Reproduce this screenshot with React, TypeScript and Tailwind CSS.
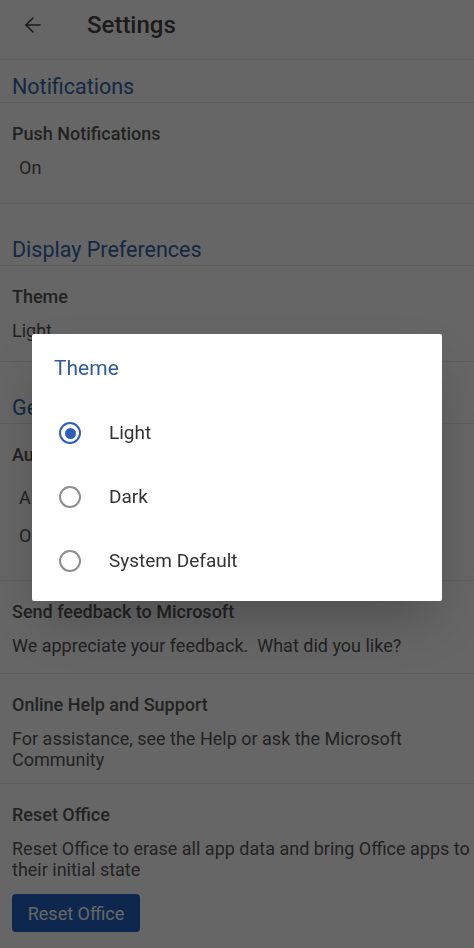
import { ArrowLeft } from "lucide-react";

const themes = ["Light", "Dark", "System Default"];

function SectionHeader({ title, top }: { title: string; top: string }) {
  return (
    <div className={`border-b border-[#ececec] px-3 pb-[2px] ${top}`}>
      <h2 className="text-[21.5px] leading-[26px] text-[#3565a8]">{title}</h2>
    </div>
  );
}

function Radio({ checked }: { checked: boolean }) {
  if (checked) {
    return (
      <span className="flex h-[22px] w-[22px] items-center justify-center rounded-full border-2 border-[#2f5fb3]">
        <span className="h-[11px] w-[11px] rounded-full bg-[#2f5fb3]" />
      </span>
    );
  }
  return <span className="h-[22px] w-[22px] rounded-full border-2 border-[#8f8f8f]" />;
}

export default function App() {
  const selected = "Light";

  return (
    <div className="relative min-h-[948px] bg-white text-[18px] text-[#555]" style={{ fontFamily: "Roboto, 'Noto Sans', sans-serif" }}>
      {/* toolbar */}
      <div className="flex h-[60px] items-center border-b border-[#ececec] pb-[10px] pl-[21px]">
        <ArrowLeft size={24} strokeWidth={1.6} className="text-[#444]" />
        <h1 className="ml-[42px] text-[24px] font-medium text-[#444]">Settings</h1>
      </div>

      <SectionHeader title="Notifications" top="pt-[14px]" />
      <div className="border-b border-[#ececec] px-3 pt-[20px] pb-[24px]">
        <div className="font-medium leading-[22px]">Push Notifications</div>
        <div className="mt-3 pl-[7px] leading-[22px]">On</div>
      </div>

      <SectionHeader title="Display Preferences" top="pt-[33px]" />
      <div className="border-b border-[#ececec] px-3 pt-[20px] pb-[19px]">
        <div className="font-medium leading-[22px]">Theme</div>
        <div className="mt-3 leading-[22px]">Light</div>
      </div>

      <SectionHeader title="General" top="pt-[33px]" />
      <div className="border-b border-[#ececec] px-3 pt-[20px] pb-[33px]">
        <div className="font-medium leading-[22px]">AutoSave Files</div>
        <div className="mt-[21px] pl-[7px] leading-[22px]">Always</div>
        <div className="mt-[16px] pl-[7px] leading-[22px]">Off</div>
      </div>

      <div className="border-b border-[#ececec] px-3 pt-[20px] pb-[16px]">
        <div className="font-medium leading-[22px]">Send feedback to Microsoft</div>
        <div className="mt-3 whitespace-pre leading-[22px]">We appreciate your feedback.  What did you like?</div>
      </div>

      <div className="border-b border-[#ececec] px-3 pt-[20px] pb-[13px]">
        <div className="font-medium leading-[22px]">Online Help and Support</div>
        <div className="mt-3 leading-[21px]">For assistance, see the Help or ask the Microsoft Community</div>
      </div>

      <div className="pl-3 pt-[20px] pb-[16px]">
        <div className="font-medium leading-[22px]">Reset Office</div>
        <div className="mt-3 leading-[21px]">Reset Office to erase all app data and bring Office apps to their initial state</div>
        <button className="mt-[14px] h-[38px] w-[128px] rounded-[4px] bg-[#2462c2] text-[18px] text-white">Reset Office</button>
      </div>

      {/* scrim */}
      <div className="fixed inset-0 bg-black/60" />

      {/* theme dialog */}
      <div className="absolute left-[32px] top-[334px] w-[410px] rounded-[2px] bg-white pb-[8px] shadow-2xl">
        <h3 className="pl-[22px] pt-[22px] text-[21px] leading-[24px] text-[#2f5a9c]">Theme</h3>
        <div className="mt-[21px]">
          {themes.map((t) => (
            <div key={t} className="flex h-[64px] items-center pl-[27px]">
              <Radio checked={t === selected} />
              <span className="ml-[28px] text-[19px] text-[#333]">{t}</span>
            </div>
          ))}
        </div>
      </div>
    </div>
  );
}
